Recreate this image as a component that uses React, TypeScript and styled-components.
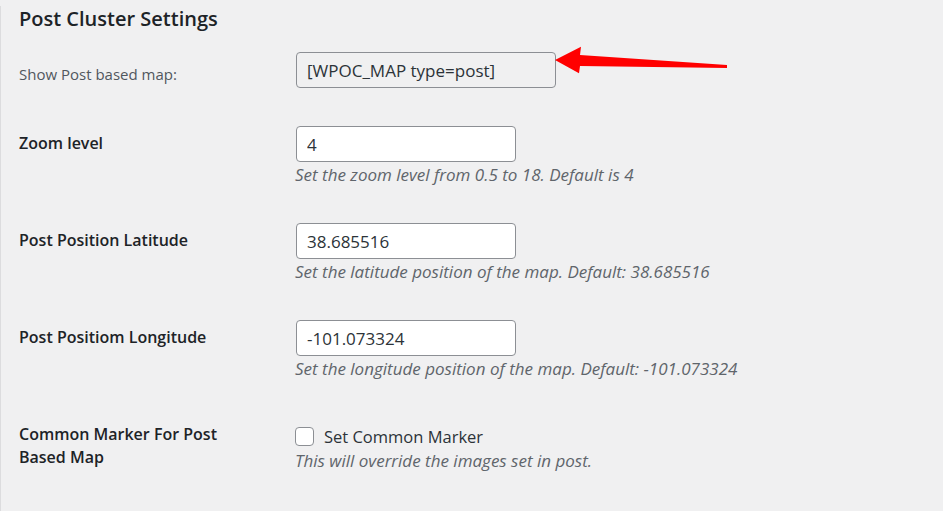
import React from "react";
import styled, { createGlobalStyle } from "styled-components";

const GlobalStyle = createGlobalStyle`
  html, body {
    margin: 0;
    padding: 0;
    background: #f0f0f1;
  }
  body {
    font-family: "Open Sans", "Noto Sans", sans-serif;
    color: #2c3338;
  }
`;

const Page = styled.div`
  min-height: 511px;
  box-sizing: border-box;
  border-left: 1px solid #dcdcde;
  padding-left: 18px;
  background: #f0f0f1;
`;

const Title = styled.h2`
  margin: 6px 0 2px;
  font-size: 20px;
  line-height: 26px;
  font-weight: 600;
  color: #1d2327;
`;

const Row = styled.div<{ $top?: number; $bottom?: number }>`
  display: grid;
  grid-template-columns: 276px 1fr;
  padding: ${(p) => p.$top ?? 18}px 0 ${(p) => p.$bottom ?? 19}px;
`;

const Label = styled.div<{ $plain?: boolean; $pad?: number }>`
  padding-top: ${(p) => p.$pad ?? 6}px;
  font-size: ${(p) => (p.$plain ? 15 : 16)}px;
  line-height: 23px;
  font-weight: ${(p) => (p.$plain ? 400 : 600)};
  color: ${(p) => (p.$plain ? "#50575e" : "#1d2327")};
  max-width: 230px;
`;

const Field = styled.div`
  display: flex;
  flex-direction: column;
  align-items: flex-start;
`;

const InputWrap = styled.div`
  position: relative;
  margin-left: 1px;
`;

const TextInput = styled.input<{ $w?: number; $readonly?: boolean }>`
  box-sizing: border-box;
  width: ${(p) => p.$w ?? 220}px;
  height: 36px;
  margin: 0;
  padding: 0 10px;
  border: 1px solid #8c8f94;
  border-radius: 4px;
  background: ${(p) => (p.$readonly ? "#f0f0f1" : "#fff")};
  font-family: "Open Sans", "Noto Sans", sans-serif;
  font-size: 17px;
  color: #2c3338;
  outline: none;
`;

const Description = styled.p`
  margin: 2px 0 0;
  font-size: 17px;
  line-height: 22px;
  font-style: italic;
  color: #5f656b;
`;

const CheckLine = styled.label`
  display: flex;
  align-items: center;
  gap: 10px;
  height: 24px;
  margin-top: 7px;
  font-size: 16.5px;
  color: #2c3338;
`;

const CheckBox = styled.span`
  box-sizing: border-box;
  width: 19px;
  height: 19px;
  border: 1px solid #8c8f94;
  border-radius: 4px;
  background: #fff;
`;

const Arrow = styled.svg`
  position: absolute;
  left: 257px;
  top: -8px;
  width: 178px;
  height: 34px;
  overflow: visible;
`;

const rows = [
  {
    label: "Zoom level",
    value: "4",
    desc: "Set the zoom level from 0.5 to 18. Default is 4",
  },
  {
    label: "Post Position Latitude",
    value: "38.685516",
    desc: "Set the latitude position of the map. Default: 38.685516",
  },
  {
    label: "Post Positiom Longitude",
    value: "-101.073324",
    desc: "Set the longitude position of the map. Default: -101.073324",
  },
];

export default function App() {
  return (
    <Page>
      <GlobalStyle />
      <Title>Post Cluster Settings</Title>

      <Row $bottom={20}>
        <Label $plain $pad={11}>
          Show Post based map:
        </Label>
        <Field>
          <InputWrap>
            <TextInput $w={260} $readonly readOnly value="[WPOC_MAP type=post]" />
            <Arrow viewBox="0 0 178 34">
              <polygon
                points="2,16 28,2.7 27,11 174,21 174,24 27,22 26,29.3"
                fill="#ff0000"
              />
            </Arrow>
          </InputWrap>
        </Field>
      </Row>

      {rows.map((r) => (
        <Row key={r.label}>
          <Label>{r.label}</Label>
          <Field>
            <InputWrap>
              <TextInput defaultValue={r.value} />
            </InputWrap>
            <Description>{r.desc}</Description>
          </Field>
        </Row>
      ))}

      <Row>
        <Label>Common Marker For Post Based Map</Label>
        <Field>
          <CheckLine>
            <CheckBox />
            Set Common Marker
          </CheckLine>
          <Description>This will override the images set in post.</Description>
        </Field>
      </Row>
    </Page>
  );
}
